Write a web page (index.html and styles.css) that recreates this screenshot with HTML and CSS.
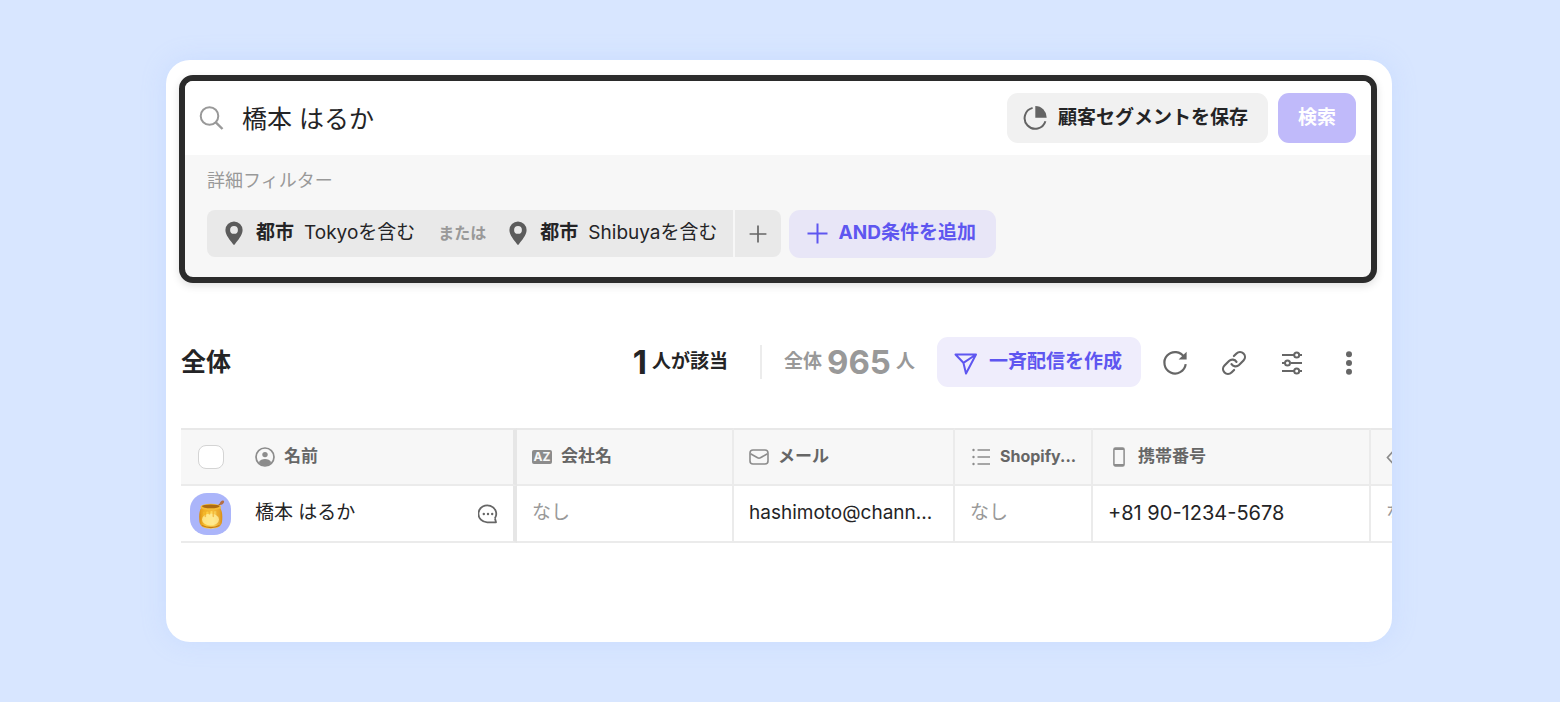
FILE: index.html
```html
<!DOCTYPE html>
<html lang="ja">
<head>
<meta charset="utf-8">
<meta name="viewport" content="width=device-width, initial-scale=1">
<title>顧客リスト</title>
<link rel="stylesheet" href="styles.css">
</head>
<body>
<main class="card">
  <form class="search" role="search">
    <div class="search-bar">
      <svg class="search-icon" width="26" height="26" viewBox="0 0 26 26" fill="none" stroke="#999" stroke-width="2" aria-hidden="true"><circle cx="10.500" cy="11" r="8.800"/><path d="M16.800 17.300 23.500 24" stroke-width="2.400"/></svg>
      <input class="search-input" type="text" value="橋本 はるか" aria-label="顧客を検索">
      <button class="btn btn-save" type="button">
        <svg width="24" height="24" viewBox="0 0 24 24" fill="none" aria-hidden="true"><path d="M9.600 1.900A10.600 10.600 0 1 0 22.400 15.200" stroke="#646464" stroke-width="2"/><path d="M12.300 0A11.300 11.300 0 0 1 23.600 11.800H12.300Z" fill="#646464"/></svg>
        顧客セグメントを保存
      </button>
      <button class="btn btn-search" type="submit">検索</button>
    </div>
    <div class="filters">
      <h2 class="filters-title">詳細フィルター</h2>
      <div class="filters-row">
        <div class="group">
          <div class="conditions">
            <button class="condition" type="button">
              <svg width="18" height="24" viewBox="0 0 18 24" aria-hidden="true"><path fill="#5c5c5c" fill-rule="evenodd" d="M9 .4A8.6 8.6 0 0 0 .4 9c0 5.4 5.3 10.800 7.700 14.200q.9 1 1.800 0C12.300 19.800 17.600 14.400 17.600 9A8.600 8.600 0 0 0 9 .4ZM9 5a3.900 3.900 0 1 1 0 7.800A3.900 3.900 0 0 1 9 5Z"/></svg>
              <b>都市</b><span>Tokyoを含む</span>
            </button>
            <span class="or">または</span>
            <button class="condition" type="button">
              <svg width="18" height="24" viewBox="0 0 18 24" aria-hidden="true"><path fill="#5c5c5c" fill-rule="evenodd" d="M9 .4A8.6 8.6 0 0 0 .4 9c0 5.4 5.3 10.800 7.700 14.200q.9 1 1.800 0C12.300 19.800 17.600 14.400 17.600 9A8.600 8.600 0 0 0 9 .4ZM9 5a3.900 3.900 0 1 1 0 7.800A3.900 3.900 0 0 1 9 5Z"/></svg>
              <b>都市</b><span>Shibuyaを含む</span>
            </button>
          </div>
          <button class="group-add" type="button" aria-label="OR条件を追加">
            <svg width="18" height="18" viewBox="0 0 18 18" stroke="#666" stroke-width="1.700" aria-hidden="true"><path d="M9 .6v16.800M.6 9h16.800"/></svg>
          </button>
        </div>
        <button class="btn btn-and" type="button">
          <svg width="21" height="21" viewBox="0 0 21 21" stroke="#5e56f0" stroke-width="2" aria-hidden="true"><path d="M10.500.5v20M.5 10.500h20"/></svg>
          AND条件を追加
        </button>
      </div>
    </div>
  </form>

  <section class="toolbar">
    <h1 class="toolbar-title">全体</h1>
    <p class="count"><strong>1</strong>人が該当</p>
    <p class="count count-total">全体<strong>965</strong><span>人</span></p>
    <button class="btn btn-send" type="button">
      <svg width="24" height="22" viewBox="0 0 24 22" fill="none" stroke="#5e56f0" stroke-width="2" stroke-linejoin="round" aria-hidden="true"><path d="M1.500 1.500H22L12 20.500 9.400 9.800ZM9.400 9.800 22 1.500"/></svg>
      一斉配信を作成
    </button>
    <div class="tools">
      <button class="tool" type="button" aria-label="更新">
        <svg width="26" height="26" viewBox="0 0 26 26" fill="none" stroke="#666" stroke-width="2.200" aria-hidden="true"><path d="M22.300 7.300A10.700 10.700 0 1 0 23.700 14.200"/><path fill="#666" stroke="none" d="M24.600 1.700V9.600H16.600Z"/></svg>
      </button>
      <button class="tool" type="button" aria-label="リンク">
        <svg width="26" height="26" viewBox="0 0 26 26" fill="none" stroke="#666" stroke-width="2.200" stroke-linecap="round" aria-hidden="true"><path d="M12.900 6 15.500 3.500a4.900 4.900 0 0 1 7 7L18 15a4.900 4.900 0 0 1-7.500-.9"/><path d="M13.100 20 10.500 22.500a4.900 4.900 0 0 1-7-7L8 11a4.900 4.900 0 0 1 7.500.9"/></svg>
      </button>
      <button class="tool" type="button" aria-label="表示設定">
        <svg width="24" height="24" viewBox="0 0 24 24" fill="none" stroke="#666" stroke-width="2" aria-hidden="true"><path d="M2 4h12M19.500 4H22M2 12h3.500M11 12h11M2 20h12M19.500 20H22"/><circle cx="16.700" cy="4" r="2.500"/><circle cx="7.500" cy="12" r="2.500"/><circle cx="16.700" cy="20" r="2.500"/></svg>
      </button>
      <button class="tool" type="button" aria-label="その他">
        <svg width="8" height="24" viewBox="0 0 8 24" fill="#666" aria-hidden="true"><circle cx="4" cy="3.200" r="3"/><circle cx="4" cy="12" r="3"/><circle cx="4" cy="20.800" r="3"/></svg>
      </button>
    </div>
  </section>

  <div class="table-wrap">
    <table class="table">
      <colgroup><col class="c-check"><col class="c-name"><col class="c-company"><col class="c-mail"><col class="c-shopify"><col class="c-phone"><col class="c-extra"></colgroup>
      <thead>
        <tr>
          <th class="check"><input class="checkbox" type="checkbox" aria-label="すべて選択"></th>
          <th class="name"><div class="head">
            <svg width="20" height="20" viewBox="0 0 20 20" aria-hidden="true"><circle cx="10" cy="10" r="9" fill="none" stroke="#8c8c8c" stroke-width="1.700"/><circle cx="10" cy="7.600" r="2.700" fill="#8c8c8c"/><path fill="#8c8c8c" d="M3.800 15.200C5 13 7.300 11.900 10 11.900s5 1.100 6.200 3.300C14.700 17.500 12.600 18.800 10 18.800S5.300 17.500 3.800 15.200Z"/></svg>
            <span>名前</span></div></th>
          <th><div class="head">
            <i class="az" aria-hidden="true">AZ</i>
            <span>会社名</span></div></th>
          <th><div class="head">
            <svg width="20" height="16" viewBox="0 0 20 16" fill="none" stroke="#8c8c8c" stroke-width="1.600" aria-hidden="true"><rect x="1" y="1" width="18" height="14" rx="3"/><path d="M1.500 4.800 8.600 8.800q1.400.7 2.800 0L18.500 4.800"/></svg>
            <span>メール</span></div></th>
          <th><div class="head head-list">
            <svg width="18" height="18" viewBox="0 0 18 18" aria-hidden="true"><path d="M5.500 2H18M5.500 9H18M5.500 16H18" stroke="#8c8c8c" stroke-width="1.500"/><g fill="#8c8c8c"><circle cx="1.500" cy="2" r="1.200"/><circle cx="1.500" cy="9" r="1.200"/><circle cx="1.500" cy="16" r="1.200"/></g></svg>
            <span>Shopify...</span></div></th>
          <th><div class="head head-phone">
            <svg width="12" height="20" viewBox="0 0 12 20" fill="none" aria-hidden="true"><rect x=".9" y="1" width="10.200" height="18" rx="1.500" stroke="#8c8c8c" stroke-width="1.500"/><path d="M1 2h10M1 18h10" stroke="#8c8c8c" stroke-width="2"/></svg>
            <span>携帯番号</span></div></th>
          <th><div class="head">
            <svg width="20" height="16" viewBox="0 0 20 16" fill="none" stroke="#8c8c8c" stroke-width="1.700" aria-hidden="true"><path d="M7 2.500 1.500 8.500 7 14.500M13 2.500l5.500 6-5.500 6"/></svg>
          </div></th>
        </tr>
      </thead>
      <tbody>
        <tr>
          <td class="check">
            <svg width="42" height="42" viewBox="0 0 42 42" role="img" aria-label="はちみつ">
              <defs><linearGradient id="honey" x1="0" x2="1"><stop offset="0" stop-color="#d98a12"/><stop offset=".25" stop-color="#fbc531"/><stop offset=".6" stop-color="#ffdc62"/><stop offset="1" stop-color="#d98d16"/></linearGradient></defs>
              <rect width="41" height="42" rx="17" ry="16" fill="#abb5fa"/>
              <path d="m28 13 4-3.500" stroke="#a9683a" stroke-width="1.500"/><ellipse cx="32" cy="9.600" rx="2.500" ry="1.600" transform="rotate(-45 32 9.600)" fill="#b56f44"/>
              <path d="M11.500 14.500C9 18 8.800 23 9.500 29c.7 4 4 6.700 11.200 6.700S31.300 33 32 29c.7-6 .3-11-2-14.500Z" fill="url(#honey)"/>
              <ellipse cx="20.500" cy="26.500" rx="8.500" ry="6" fill="#ffec9a" opacity=".8"/>
              <path d="M10.500 16v5q1.300 2 2 0v-2q1.500-1 2 0v4.500q1 1.600 1.600 0v-4.500q1.400-1 2.400 0v2q1.300 1.300 1.800 0v-2.500q1.500-1 2.200 0v5q1 1.400 1.600 0v-5q1.500-1 2.400 0v4q1 1.500 2.300 0V16Z" fill="#eda31f" opacity=".6"/>
              <ellipse cx="20.800" cy="14" rx="10.400" ry="3.300" fill="#f5bd38"/><ellipse cx="20.800" cy="13.300" rx="8.800" ry="1.900" fill="#ad6b12"/>
              <path d="M12 32.500q9 4 17.500 0" fill="none" stroke="#c77a16" stroke-width="1.300"/>
            </svg>
          </td>
          <td class="name"><div class="person"><span class="value">橋本 はるか</span>
            <button class="tool" type="button" aria-label="チャット">
              <svg width="20" height="20" viewBox="0 0 20 20" aria-hidden="true"><path d="M16.900 14.300A8.900 8.500 0 1 0 10 18.300H18L16.900 14.300" fill="none" stroke="#666" stroke-width="1.800" stroke-linejoin="round"/><g fill="#666"><circle cx="5.800" cy="10" r="1.200"/><circle cx="10" cy="10" r="1.200"/><circle cx="14.200" cy="10" r="1.200"/></g></svg>
            </button></div></td>
          <td class="none"><span class="value">なし</span></td>
          <td><span class="value">hashimoto@chann...</span></td>
          <td class="none"><span class="value">なし</span></td>
          <td class="phone"><span class="value">+81 90-1234-5678</span></td>
          <td class="none"><span class="value">なし</span></td>
        </tr>
      </tbody>
    </table>
  </div>
</main>
</body>
</html>
```

FILE: styles.css
```css
* { box-sizing: border-box; }
body {
  margin: 0;
  padding: 60px 168px 60px 166px;
  background: #d8e6ff;
  color: #242426;
  font-family: Inter, "Noto Sans CJK JP", sans-serif;
  font-size: 19px;
  line-height: 28px;
}
h1, h2, p { margin: 0; }
svg { display: block; flex: none; }
button, input { font: inherit; color: inherit; margin: 0; }
button { border: 0; padding: 0; background: none; white-space: nowrap; cursor: pointer; }

.card {
  min-height: calc(100vh - 120px);
  padding: 15px 0 0 13px;
  overflow: hidden;
  border-radius: 24px;
  background: #fff;
  box-shadow: 0 0 24px rgba(160, 190, 255, .25);
}

.search {
  margin-right: 15px;
  overflow: hidden;
  border: 6px solid #2b2b2b;
  border-radius: 14px;
  background: #f7f7f7;
  box-shadow: 0 3px 8px rgba(0, 0, 0, .12);
}
.search-bar {
  display: flex;
  align-items: center;
  gap: 10px;
  padding: 12px 15px 12px 14px;
  background: #fff;
}
.search-input {
  flex: 1;
  min-width: 0;
  padding: 1px 0 0 7px;
  border: 0;
  outline: 0;
  background: none;
  font-size: 25px;
  line-height: 36px;
}
.btn {
  display: flex;
  align-items: center;
  justify-content: center;
  gap: 11px;
  height: 50px;
  border-radius: 11px;
  font-weight: 700;
}
.btn-save { padding: 0 20px 0 16px; background: #f1f1f1; }
.btn-search { padding: 0 20px; background: #c0bafa; color: #fff; }

.filters { padding: 12px 22px 19px; }
.filters-title {
  margin-bottom: 15px;
  color: #999;
  font-size: 18px;
  font-weight: 400;
  line-height: 28px;
}
.filters-row { display: flex; align-items: flex-start; gap: 8px; }
.group { display: flex; gap: 2px; height: 47px; border-radius: 8px; overflow: hidden; }
.conditions { display: flex; align-items: center; gap: 23px; padding: 0 15px 2px 18px; background: #e9e9e9; }
.condition { display: flex; align-items: center; }
.condition svg { margin-top: 1px; }
.condition b { margin: 0 10px 0 13px; }
.or { color: #999; font-size: 16px; font-weight: 700; }
.group-add { display: grid; place-items: center; width: 46px; background: #e9e9e9; }
.btn-and { height: 48px; padding: 0 20px 2px 18px; background: #e8e6f7; color: #5e56f0; }

.toolbar { display: flex; align-items: center; padding: 54px 39px 41px 2px; }
.toolbar-title { margin-right: auto; font-size: 25px; line-height: 36px; }
.count {
  display: flex;
  align-items: center;
  gap: 5px;
  font-weight: 700;
  line-height: 34px;
  white-space: nowrap;
}
.count strong { font-size: 33px; font-weight: 700; }
.count-total { margin: 0 22px 0 32px; padding-left: 22px; border-left: 2px solid #ececec; color: #999; }
.btn-send { padding: 0 19px 0 17px; background: #efedfc; color: #5e56f0; }
.btn-send svg { margin-top: 4px; }
.tools { display: flex; align-items: center; gap: 33px; margin: 2px 0 0 21px; }
.tool { display: grid; place-items: center; }
.tools .tool:last-child { margin-left: 8px; }

.table-wrap { margin-left: 2px; overflow: hidden; }
.table { width: 1400px; table-layout: fixed; border-collapse: separate; border-spacing: 0; }
.c-check { width: 59px; }
.c-name { width: 277px; }
.c-company { width: 217px; }
.c-mail { width: 221px; }
.c-shopify { width: 138px; }
.c-phone { width: 278px; }
th, td {
  padding: 0 15px;
  border-right: 2px solid #ebebeb;
  border-bottom: 2px solid #ebebeb;
  text-align: left;
  white-space: nowrap;
  font-weight: 400;
}
th {
  height: 58px;
  border-top: 2px solid #e8e8e8;
  background: #f7f7f7;
  color: #666;
  font-size: 17px;
  font-weight: 700;
}
td { height: 57px; }
.check { padding: 0 0 0 9px; border-right: 0; }
th.check { padding-left: 17px; }
.name { border-right-width: 4px; border-right-color: #e6e6e6; }
.head { display: flex; align-items: center; gap: 9px; }
.head span, .value { display: block; padding-bottom: 2px; }
.head-list { gap: 10px; padding-left: 2px; font-size: 16px; }
.head-phone { gap: 13px; padding-left: 5px; }
.az {
  width: 20px;
  border-radius: 2px;
  background: #8c8c8c;
  color: #f7f7f7;
  font-size: 12px;
  font-style: normal;
  line-height: 14px;
  text-align: center;
}
.person { display: flex; align-items: center; justify-content: space-between; }
.none { color: #999; }
.phone { font-size: 20px; }
.checkbox {
  display: block;
  appearance: none;
  width: 26px;
  height: 24px;
  border: 1px solid #d4d4d4;
  border-radius: 8px;
  background: #fff;
}
```
